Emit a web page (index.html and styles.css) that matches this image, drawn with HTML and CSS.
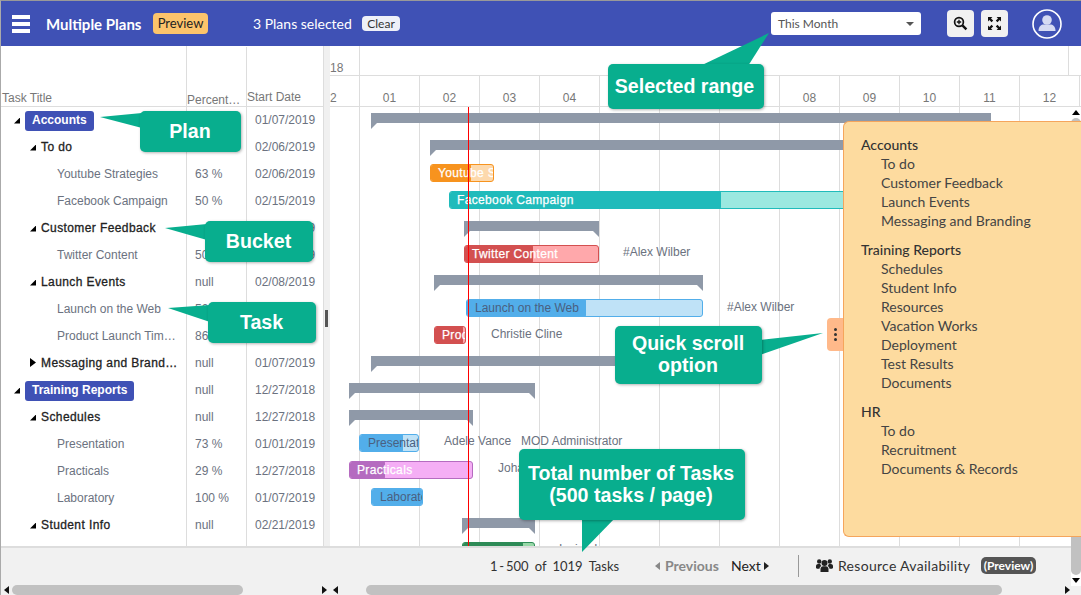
FILE: index.html
```html
<!DOCTYPE html>
<html lang="en">
<head>
    <meta charset="UTF-8">
    <title>Multiple Plans</title>
    <link rel="stylesheet" href="styles.css">
</head>
<body>
    <div class="app">
        <header class="topbar">
            <div class="burger"><span></span><span></span><span></span></div>
            <div class="title">Multiple Plans</div>
            <div class="preview">Preview</div>
            <div class="selected">3 Plans selected</div>
            <div class="clear">Clear</div>
            <div class="range"><span>This Month</span><i class="caret"></i></div>
            <div class="tool tool-first">
                <svg width="15" height="15" viewBox="0 0 15 15"><circle cx="6" cy="6" r="4.4" fill="none" stroke="#111" stroke-width="1.7"/><path d="M9.4 9.4l4 4" stroke="#111" stroke-width="2.4"/><path d="M6 3.8v4.4M3.8 6h4.4" stroke="#111" stroke-width="1.3"/></svg>
            </div>
            <div class="tool">
                <svg width="15" height="15" viewBox="0 0 15 15"><path d="M1 1h4.4L4 2.4 6.2 4.6 4.6 6.2 2.4 4 1 5.4zM14 1v4.4L12.6 4 10.4 6.2 8.8 4.6 11 2.4 9.6 1zM1 14V9.6L2.4 11l2.2-2.2 1.6 1.6L4 12.6 5.4 14zM14 14H9.6l1.4-1.4-2.2-2.2 1.6-1.6 2.2 2.2L14 9.6z" fill="#111"/></svg>
            </div>
            <svg class="avatar" width="30" height="30" viewBox="0 0 30 30"><circle cx="15" cy="15" r="14" fill="none" stroke="#fff" stroke-width="1.6"/><circle cx="15" cy="11" r="4.8" fill="#d5daf2"/><path d="M6.5 22c0-5 3-6.5 5-6.5h7c2 0 5 1.500 5 6.500z" fill="#d5daf2"/></svg>
        </header>

        <div class="main">
            <section class="tasks">
                <div class="cols cols-head">
                    <div class="col-title">Task Title</div>
                    <div class="col-pct">Percent…</div>
                    <div class="col-date">Start Date</div>
                </div>
                <div class="cols plan"><div class="name"><i class="open"></i><b>Accounts</b></div><div class="pct">null</div><div class="date">01/07/2019</div></div>
                <div class="cols bucket"><div class="name"><i class="open"></i>To do</div><div class="pct">null</div><div class="date">02/06/2019</div></div>
                <div class="cols task"><div class="name">Youtube Strategies</div><div class="pct">63 %</div><div class="date">02/06/2019</div></div>
                <div class="cols task"><div class="name">Facebook Campaign</div><div class="pct">50 %</div><div class="date">02/15/2019</div></div>
                <div class="cols bucket"><div class="name"><i class="open"></i>Customer Feedback</div><div class="pct">null</div><div class="date">02/08/2019</div></div>
                <div class="cols task"><div class="name">Twitter Content</div><div class="pct">50 %</div><div class="date">02/08/2019</div></div>
                <div class="cols bucket"><div class="name"><i class="open"></i>Launch Events</div><div class="pct">null</div><div class="date">02/08/2019</div></div>
                <div class="cols task"><div class="name">Launch on the Web</div><div class="pct">50 %</div><div class="date">02/08/2019</div></div>
                <div class="cols task"><div class="name">Product Launch Tim…</div><div class="pct">86 %</div><div class="date">02/08/2019</div></div>
                <div class="cols bucket"><div class="name"><i class="shut"></i>Messaging and Brand…</div><div class="pct">null</div><div class="date">01/07/2019</div></div>
                <div class="cols plan"><div class="name"><i class="open"></i><b>Training Reports</b></div><div class="pct">null</div><div class="date">12/27/2018</div></div>
                <div class="cols bucket"><div class="name"><i class="open"></i>Schedules</div><div class="pct">null</div><div class="date">12/27/2018</div></div>
                <div class="cols task"><div class="name">Presentation</div><div class="pct">73 %</div><div class="date">01/01/2019</div></div>
                <div class="cols task"><div class="name">Practicals</div><div class="pct">29 %</div><div class="date">12/27/2018</div></div>
                <div class="cols task"><div class="name">Laboratory</div><div class="pct">100 %</div><div class="date">01/07/2019</div></div>
                <div class="cols bucket"><div class="name"><i class="open"></i>Student Info</div><div class="pct">null</div><div class="date">02/21/2019</div></div>
                <div class="cols filler"><div></div><div></div><div></div></div>
            </section>

            <div class="splitter"><span></span></div>

            <section class="gantt">
                <div class="scale-top"><div class="yr">18</div><div class="yr-rest"></div></div>
                <div class="scale-bottom">
                    <div class="mo mo-first">2</div>
                    <div class="mo">01</div><div class="mo">02</div><div class="mo">03</div><div class="mo">04</div>
                    <div class="mo">05</div><div class="mo">06</div><div class="mo">07</div><div class="mo">08</div>
                    <div class="mo">09</div><div class="mo">10</div><div class="mo">11</div><div class="mo">12</div>
                </div>
                <div class="chart">
                    <div class="row"><div class="sum sum-l" style="left:41px;width:620px"></div></div>
                    <div class="row"><div class="sum sum-l" style="left:100px;width:460px"></div></div>
                    <div class="row"><div class="bar orange" style="left:100px;width:64px"><div class="done" style="width:41px"></div><span>Youtube Strategies</span></div></div>
                    <div class="row"><div class="bar teal" style="left:119px;width:600px"><div class="done" style="width:272px"></div><span>Facebook Campaign</span></div></div>
                    <div class="row"><div class="sum sum-l sum-r" style="left:134px;width:135px"></div></div>
                    <div class="row"><div class="bar red" style="left:134px;width:135px"><div class="done" style="width:69px"></div><span>Twitter Content</span></div><div class="who" style="left:293px">#Alex Wilber</div></div>
                    <div class="row"><div class="sum sum-l sum-r" style="left:104px;width:269px"></div></div>
                    <div class="row"><div class="bar blue" style="left:136px;width:237px"><div class="done" style="width:120px"></div><span>Launch on the Web</span></div><div class="who who-mid" style="left:397px">#Alex Wilber</div></div>
                    <div class="row"><div class="bar red" style="left:104px;width:32px"><div class="done" style="width:29px"></div><span>Product Launch Timeline</span></div><div class="who who-mid" style="left:161px">Christie Cline</div></div>
                    <div class="row"><div class="sum sum-l" style="left:41px;width:380px"></div></div>
                    <div class="row"><div class="sum sum-l sum-r" style="left:19px;width:186px"></div></div>
                    <div class="row"><div class="sum sum-l sum-r" style="left:19px;width:124px"></div></div>
                    <div class="row"><div class="bar blue" style="left:29px;width:60px"><div class="done" style="width:44px"></div><span>Presentation</span></div><div class="who" style="left:114px">Adele Vance</div><div class="who" style="left:191px">MOD Administrator</div></div>
                    <div class="row"><div class="bar purple" style="left:19px;width:124px"><div class="done" style="width:36px"></div><span>Practicals</span></div><div class="who" style="left:168px">Johanna Lorenz</div></div>
                    <div class="row"><div class="bar blue" style="left:41px;width:52px"><div class="done" style="width:52px"></div><span>Laboratory</span></div></div>
                    <div class="row"><div class="sum sum-l sum-r" style="left:132px;width:73px"></div></div>
                    <div class="row"><div class="bar green" style="left:132px;width:73px"><div class="done" style="width:61px"></div></div><div class="who who-low" style="left:229px">Isaiah Langer</div></div>
                    <div class="today"></div>
                </div>
            </section>
        </div>

        <footer class="foot">
            <div class="pager">
                <div class="count"><span class="count-range">1 - 500</span><span>of</span><span>1019</span><span>Tasks</span></div>
                <div class="prev"><i class="tri-l"></i>Previous</div>
                <div class="next">Next<i class="tri-r"></i></div>
                <div class="divider"></div>
                <svg class="users" width="17" height="15" viewBox="0 0 17 15"><circle cx="8.500" cy="5" r="3" fill="#222"/><circle cx="3.200" cy="3.500" r="2.200" fill="#222"/><circle cx="13.800" cy="3.500" r="2.200" fill="#222"/><path d="M4.500 14v-3c0-2 1.500-2.800 2.500-2.800h3c1 0 2.500.8 2.500 2.800v3z" fill="#222"/><path d="M0 10V8c0-1.200 1-2 2-2h2.200c.3 1 .8 1.500 1.300 2-1.300.5-2 1.600-2 2.800H1z M17 10V8c0-1.200-1-2-2-2h-2.200c-.3 1-.8 1.500-1.300 2 1.300.5 2 1.600 2 2.800h2.500z" fill="#222"/></svg>
                <div class="resource">Resource Availability</div>
                <div class="res-tag">(Preview)</div>
            </div>
            <div class="scrolls">
                <div class="hbar hbar-left"><i class="tri-l dark"></i><div class="track"><div class="thumb thumb-left"></div></div><i class="tri-r dark"></i></div>
                <div class="hbar hbar-right"><i class="tri-l dark"></i><div class="track"><div class="thumb thumb-right"></div></div><i class="tri-r dark"></i></div>
            </div>
        </footer>

        <div class="vbar"><i class="tri-u"></i><div class="vthumb"></div><i class="tri-d"></i></div>

        <div class="handle"><span></span><span></span><span></span></div>
        <aside class="quick">
            <div class="group"><h4>Accounts</h4><p>To do</p><p>Customer Feedback</p><p>Launch Events</p><p>Messaging and Branding</p></div>
            <div class="group"><h4>Training Reports</h4><p>Schedules</p><p>Student Info</p><p>Resources</p><p>Vacation Works</p><p>Deployment</p><p>Test Results</p><p>Documents</p></div>
            <div class="group"><h4>HR</h4><p>To do</p><p>Recruitment</p><p>Documents &amp; Records</p></div>
        </aside>

        <svg class="tails" width="1081" height="595" viewBox="0 0 1081 595">
            <polygon points="100,117 142,113 142,128"/>
            <polygon points="165,228 207,224 207,240"/>
            <polygon points="168,308 210,305 210,322"/>
            <polygon points="700,66 769,33 748,66"/>
            <polygon points="823,333 760,340 760,355"/>
            <polygon points="582,552 582,517 616,517"/>
        </svg>
        <div class="note note-plan">Plan</div>
        <div class="note note-bucket">Bucket</div>
        <div class="note note-task">Task</div>
        <div class="note note-range">Selected range</div>
        <div class="note note-scroll">Quick scroll<br>option</div>
        <div class="note note-total">Total number of Tasks<br>(500 tasks / page)</div>
    </div>
</body>
</html>
```

FILE: styles.css
```css
* {
    box-sizing: border-box;
}
body {
    margin: 0;
    font-family: "Liberation Sans", Arial, sans-serif;
    font-size: 12px;
    color: #6b7280;
    overflow: hidden;
}
.app {
    position: relative;
    width: 1081px;
    height: 595px;
    display: flex;
    flex-direction: column;
    border-top: 1px solid #999;
    border-left: 1px solid #aaa;
    overflow: hidden;
    background: #fff;
}

/* top bar */
.topbar {
    height: 45px;
    flex: none;
    display: flex;
    align-items: center;
    background-color: #3f51b5;
    color: #fff;
    font-family: Lato, sans-serif;
}
.burger {
    width: 18px;
    margin-left: 11px;
    display: flex;
    flex-direction: column;
    gap: 3px;
}
.burger span {
    height: 4px;
    background: #fff;
}
.title {
    margin-left: 16px;
    font-size: 15px;
    font-weight: 700;
    width: 107px;
    white-space: nowrap;
}
.preview {
    width: 55px;
    height: 21px;
    line-height: 21px;
    text-align: center;
    background-color: #fcc46b;
    color: #222;
    border-radius: 4px;
    font-size: 13px;
}
.selected {
    margin-left: 45px;
    width: 109px;
    font-size: 14px;
    white-space: nowrap;
}
.clear {
    width: 38px;
    height: 15px;
    line-height: 15px;
    text-align: center;
    background: #eef0f8;
    color: #333;
    border-radius: 4px;
    font-size: 12px;
}
.range {
    margin-left: 371px;
    width: 150px;
    height: 23px;
    padding: 0 7px;
    display: flex;
    align-items: center;
    justify-content: space-between;
    background: #fff;
    color: #555;
    border-radius: 3px;
    font-size: 12px;
}
.caret {
    border-left: 4px solid transparent;
    border-right: 4px solid transparent;
    border-top: 4px solid #555;
    margin-right: 0;
}
.tool {
    margin-left: 7px;
    width: 27px;
    height: 27px;
    display: flex;
    align-items: center;
    justify-content: center;
    background: #f1f1f1;
    border-radius: 4px;
}
.tool-first {
    margin-left: 26px;
}
.avatar {
    margin-left: 24px;
}

/* main area */
.main {
    height: 500px;
    flex: none;
    display: flex;
}
.tasks {
    width: 322px;
    flex: none;
}
.cols {
    display: grid;
    grid-template-columns: 186px 60px 1fr;
    height: 27px;
    align-items: center;
    white-space: nowrap;
}
.cols > div {
    height: 100%;
    display: flex;
    align-items: center;
    padding-bottom: 2px;
    border-right: 1px solid #ddd;
}
.cols > div:last-child {
    border-right: none;
}
.cols-head {
    height: 61px;
    color: #777;
    border-bottom: 1px solid #ddd;
}
.cols-head > div {
    align-items: flex-end;
    padding-bottom: 1px;
}
.cols-head .col-title {
    padding-left: 1px;
}
.cols-head .col-pct {
    padding-bottom: 0;
    margin-bottom: -1px;
}
.cols-head .col-date {
    padding-bottom: 2px;
}
.filler {
    height: 8px;
}
.pct {
    padding-left: 8px;
}
.date {
    padding-left: 8px;
}
.task .name {
    padding-left: 56px;
}
.bucket .name {
    padding-left: 29px;
    color: #222;
    letter-spacing: 0.4px;
    -webkit-text-stroke: 0.3px #222;
}
.plan .name {
    padding-left: 13px;
}
.plan b {
    padding: 0 7px;
    height: 20px;
    line-height: 19px;
    margin-top: 2px;
    background-color: #3f51b5;
    color: #fff;
    border-radius: 3px;
}
.open {
    width: 6px;
    height: 6px;
    margin-right: 5px;
    margin-top: 2px;
    background: #000;
    clip-path: polygon(100% 0, 100% 100%, 0 100%);
}
.shut {
    width: 6px;
    height: 9px;
    margin-right: 5px;
    background: #000;
    clip-path: polygon(0 0, 100% 50%, 0 100%);
}
.splitter {
    width: 7px;
    flex: none;
    background: #f0f0f0;
    border-left: 1px solid #ddd;
    position: relative;
}
.splitter span {
    position: absolute;
    left: 1px;
    top: 264px;
    width: 3px;
    height: 17px;
    background: #555;
}

/* timeline */
.gantt {
    flex: 1;
    min-width: 0;
}
.scale-top {
    height: 30px;
    display: flex;
    border-bottom: 1px solid #ddd;
}
.yr {
    width: 30px;
    border-right: 1px solid #ddd;
    padding-top: 15px;
    color: #777;
}
.yr-rest {
    width: 709px;
    border-right: 1px solid #ddd;
}
.scale-bottom {
    height: 31px;
    display: flex;
    border-bottom: 1px solid #ddd;
    color: #777;
}
.mo {
    width: 60px;
    flex: none;
    text-align: center;
    padding-top: 15px;
    border-right: 1px solid #ddd;
}
.mo-first {
    width: 30px;
    text-align: left;
}
.chart {
    position: relative;
    height: 439px;
    overflow: hidden;
    background: linear-gradient(90deg, transparent 59px, #ddd 59px) 30px 0 / 60px 100% repeat-x;
}
.row {
    position: relative;
    height: 27px;
}
.sum {
    position: absolute;
    top: 6px;
    height: 10px;
    background-color: #8f99a8;
}
.sum-l::before,
.sum-r::after {
    content: "";
    position: absolute;
    top: 10px;
    border-top: 6px solid #8f99a8;
}
.sum-l::before {
    left: 0;
    border-right: 6px solid transparent;
}
.sum-r::after {
    right: 0;
    border-left: 6px solid transparent;
}
.bar {
    position: absolute;
    top: 3px;
    height: 18px;
    border-radius: 3px;
    border: 1px solid;
    overflow: hidden;
}
.bar span {
    position: absolute;
    left: 7px;
    top: 1px;
    line-height: 15px;
    color: #fff;
    letter-spacing: 0.35px;
    -webkit-text-stroke: 0.25px #fff;
    white-space: nowrap;
}
.done {
    position: absolute;
    left: -1px;
    top: -1px;
    height: 18px;
    border-radius: 3px 2px 2px 3px;
}
.orange { background: #fdd9ad; border-color: #f7931e; }
.orange .done { background: #f7931e; }
.teal { background: #9be8e0; border-color: #20bbbb; }
.teal .done { background: #20bbbb; }
.red { background: #ffa8ab; border-color: #d35050; }
.red .done { background: #d35050; }
.blue { background: #bfe2f7; border-color: #52aeea; }
.blue .done { background: #52aeea; }
.bar.blue span { left: 8px; color: #4a6080; letter-spacing: 0; -webkit-text-stroke: 0; }
.purple { background: #f5aef5; border-color: #b56bc0; }
.purple .done { background: #b56bc0; }
.green { background: #98d8a8; border-color: #2e8b57; }
.green .done { background: #2e8b57; }
.who {
    position: absolute;
    top: 1px;
    line-height: 19px;
    white-space: nowrap;
}
.who-mid {
    top: 2px;
}
.today {
    position: absolute;
    left: 138px;
    top: 0;
    width: 1px;
    height: 100%;
    background: #f00;
}

/* bottom bar */
.foot {
    height: 49px;
    flex: none;
    background: #f1f1f1;
    border-top: 2px solid #ddd;
    font-family: Lato, sans-serif;
    font-size: 14px;
    color: #333;
}
.pager {
    height: 35px;
    margin-bottom: 2px;
    display: flex;
    align-items: center;
}
.count {
    margin-left: 489px;
    width: 129px;
    display: flex;
    gap: 6px;
    font-size: 13px;
    white-space: nowrap;
}
.count-range {
    word-spacing: -1.5px;
}
.prev {
    margin-left: 36px;
    width: 76px;
    color: #888;
    font-weight: 700;
    display: flex;
    align-items: center;
    gap: 5px;
    white-space: nowrap;
}
.next {
    display: flex;
    align-items: center;
    gap: 3px;
    width: 67px;
    color: #222;
}
.divider {
    width: 1px;
    height: 22px;
    background: #999;
}
.users {
    margin-left: 17px;
}
.resource {
    margin-left: 5px;
    width: 143px;
    letter-spacing: 0.3px;
    white-space: nowrap;
}
.res-tag {
    width: 55px;
    height: 17px;
    line-height: 17px;
    text-align: center;
    background: #555;
    color: #fff;
    border-radius: 5px;
    font-size: 12px;
    font-weight: 700;
}
.tri-l, .tri-r {
    display: inline-block;
    border-top: 4px solid transparent;
    border-bottom: 4px solid transparent;
}
.tri-l {
    border-right: 5px solid #888;
}
.tri-r {
    border-left: 5px solid #222;
}
.tri-l.dark {
    border-right-color: #111;
}
.tri-r.dark {
    border-left-color: #111;
}
.scrolls {
    height: 10px;
    display: flex;
}
.hbar {
    height: 10px;
    display: flex;
    align-items: center;
    flex: none;
}
.hbar-left {
    width: 329px;
    padding: 0 3px 0 3px;
}
.hbar-right {
    width: 741px;
    padding: 0 1px 0 3px;
}
.track {
    flex: 1;
    height: 10px;
    margin: 0 2px;
}
.thumb {
    height: 10px;
    background: #c1c1c1;
    border-radius: 5px;
}
.thumb-left {
    width: 231px;
    margin-left: 1px;
}
.thumb-right {
    width: 636px;
    margin-left: 26px;
}
.vbar {
    position: absolute;
    right: 0;
    top: 106px;
    width: 10px;
    height: 479px;
    background: #fff;
    display: flex;
    flex-direction: column;
    align-items: center;
}
.vthumb {
    flex: 1;
    width: 10px;
    margin: 3px 0 3px;
    background: #c1c1c1;
    border-radius: 5px;
}
.tri-u, .tri-d {
    margin-top: 3px;
    border-left: 4px solid transparent;
    border-right: 4px solid transparent;
}
.tri-u {
    border-bottom: 5px solid #000;
}
.tri-d {
    margin: 0 0 3px;
    border-top: 5px solid #000;
}

/* quick scroll panel */
.quick {
    position: absolute;
    left: 842px;
    top: 120px;
    width: 238px;
    height: 416px;
    padding: 13px 0 0 17px;
    background: #fddb9f;
    border: 1px solid #f5a55c;
    border-right: none;
    border-radius: 6px 0 0 6px;
    font-family: Lato, sans-serif;
    font-size: 14px;
    line-height: 19px;
    color: #444;
}
.group {
    margin-bottom: 10px;
}
.group h4 {
    margin: 0;
    font-size: 14px;
    font-weight: 500;
    color: #333;
}
.group p {
    margin: 0 0 0 20px;
}
.handle {
    position: absolute;
    left: 826px;
    top: 317px;
    width: 16px;
    height: 33px;
    display: flex;
    flex-direction: column;
    align-items: center;
    justify-content: center;
    gap: 2px;
    background: #ffb98a;
    border-radius: 4px 0 0 4px;
}
.handle span {
    width: 3px;
    height: 3px;
    background: #333;
    border-radius: 50%;
}

/* teaching callouts */
.tails {
    position: absolute;
    left: -1px;
    top: -1px;
    fill: #08ae8e;
    pointer-events: none;
}
.note {
    position: absolute;
    display: flex;
    align-items: center;
    justify-content: center;
    text-align: center;
    padding: 0 1px 2px 0;
    background-color: #08ae8e;
    color: #fff;
    font-weight: 700;
    font-size: 19.6px;
    line-height: 22px;
    border-radius: 5px;
    box-shadow: 1px 1px 3px rgba(0, 0, 0, 0.3);
}
.note-plan { left: 139px; top: 110px; width: 101px; height: 41px; }
.note-bucket { left: 204px; top: 220px; width: 108px; height: 41px; }
.note-task { left: 207px; top: 301px; width: 108px; height: 41px; }
.note-range { left: 607px; top: 63px; width: 156px; height: 45px; padding-right: 3px; }
.note-scroll { left: 614px; top: 325px; width: 147px; height: 58px; }
.note-total { left: 518px; top: 448px; width: 226px; height: 71px; padding-right: 2px; }
```
